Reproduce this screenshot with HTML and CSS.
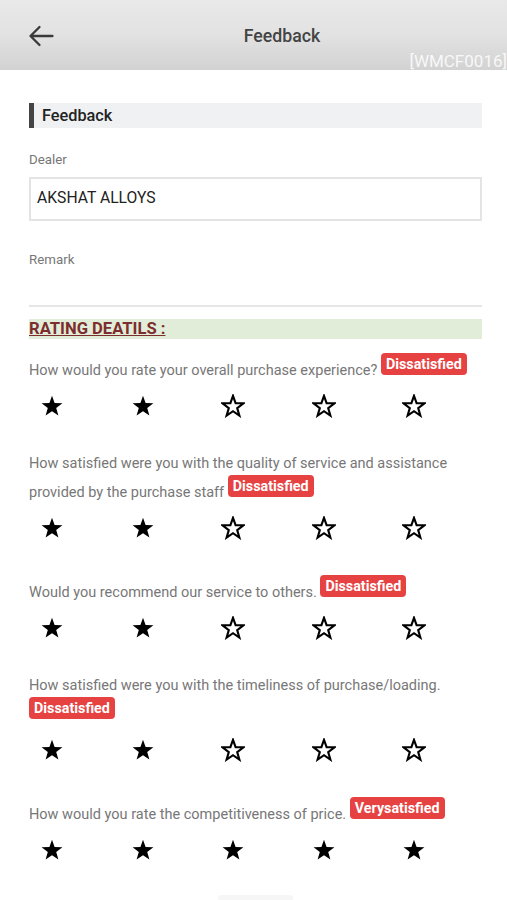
FILE: index.html
```html
<!DOCTYPE html>
<html>
<head>
<meta charset="utf-8">
<link rel="stylesheet" href="styles.css">
</head>
<body>
<svg width="0" height="0" class="defs">
  <defs>
    <path id="star" d="M12 1.8 L14.6 9.1 L22.4 9.3 L16.2 14.1 L18.4 21.6 L12 17.2 L5.6 21.6 L7.8 14.1 L1.6 9.3 L9.4 9.1 Z"/>
  </defs>
</svg>
<header class="appbar">
  <svg class="back" viewBox="0 0 26 24" width="26" height="24"><path d="M24.5 12H2.5M11.5 3 2.5 12l9 9" fill="none" stroke="#3a3a3a" stroke-width="2.3" stroke-linecap="round" stroke-linejoin="round"/></svg>
  <div class="title">Feedback</div>
  <div class="code">[WMCF0016]</div>
</header>
<main class="content">
  <div class="section-head">Feedback</div>
  <div class="label dealer-label">Dealer</div>
  <div class="input">AKSHAT ALLOYS</div>
  <div class="label remark-label">Remark</div>
  <div class="remark"></div>
  <div class="rating-head"><span>RATING DEATILS :</span></div>

  <div class="q first">
    <p class="qtext">How would you rate your overall purchase experience? <span class="badge">Dissatisfied</span></p>
    <div class="stars">
      <svg class="s f"><use href="#star"/></svg><svg class="s f"><use href="#star"/></svg><svg class="s o"><use href="#star"/></svg><svg class="s o"><use href="#star"/></svg><svg class="s o"><use href="#star"/></svg>
    </div>
  </div>
  <div class="q">
    <p class="qtext">How satisfied were you with the quality of service and assistance provided by the purchase staff <span class="badge">Dissatisfied</span></p>
    <div class="stars">
      <svg class="s f"><use href="#star"/></svg><svg class="s f"><use href="#star"/></svg><svg class="s o"><use href="#star"/></svg><svg class="s o"><use href="#star"/></svg><svg class="s o"><use href="#star"/></svg>
    </div>
  </div>
  <div class="q">
    <p class="qtext">Would you recommend our service to others. <span class="badge">Dissatisfied</span></p>
    <div class="stars">
      <svg class="s f"><use href="#star"/></svg><svg class="s f"><use href="#star"/></svg><svg class="s o"><use href="#star"/></svg><svg class="s o"><use href="#star"/></svg><svg class="s o"><use href="#star"/></svg>
    </div>
  </div>
  <div class="q">
    <p class="qtext">How satisfied were you with the timeliness of purchase/loading. <span class="badge">Dissatisfied</span></p>
    <div class="stars">
      <svg class="s f"><use href="#star"/></svg><svg class="s f"><use href="#star"/></svg><svg class="s o"><use href="#star"/></svg><svg class="s o"><use href="#star"/></svg><svg class="s o"><use href="#star"/></svg>
    </div>
  </div>
  <div class="q">
    <p class="qtext">How would you rate the competitiveness of price. <span class="badge">Verysatisfied</span></p>
    <div class="stars">
      <svg class="s f"><use href="#star"/></svg><svg class="s f"><use href="#star"/></svg><svg class="s f"><use href="#star"/></svg><svg class="s f"><use href="#star"/></svg><svg class="s f"><use href="#star"/></svg>
    </div>
  </div>
  <div class="bottom-btn"></div>
</main>
</body>
</html>
```
FILE: styles.css
```css
* { box-sizing: border-box; }
html, body { margin: 0; padding: 0; background: #fff; }
body { font-family: Roboto, "Liberation Sans", Arial, sans-serif; color: #222; width: 507px; overflow: hidden; }
.defs { position: absolute; }

.appbar {
  position: relative;
  height: 70px;
  background: linear-gradient(#e9e9e9 0%, #e2e2e2 50%, #d2d2d2 100%);
  display: flex;
  align-items: center;
  padding-top: 1px;
}
.back { position: absolute; left: 28px; top: 24px; }
.title { flex: 1; text-align: center; font-size: 17.7px; font-weight: 500; color: #444; padding-left: 57px; }
.code { position: absolute; right: 0; bottom: 0; font-size: 17px; color: rgba(255,255,255,0.85); line-height: 18px; }

.content { padding: 0 25px 0 29px; }
.section-head {
  margin-top: 33px;
  height: 25px;
  line-height: 25px;
  background: #f0f1f3;
  border-left: 5px solid #444;
  padding-left: 8px;
  font-size: 16.3px;
  font-weight: 500;
  color: #222;
}
.label { font-size: 13.3px; color: #777; line-height: 16px; }
.dealer-label { margin-top: 24px; }
.input {
  margin-top: 9px;
  height: 44px;
  border: 2px solid #e4e4e4;
  padding-left: 6px;
  font-size: 15.7px;
  line-height: 38px;
  color: #222;
}
.remark-label { margin-top: 31px; }
.remark { height: 39px; border-bottom: 2px solid #e6e6e6; }
.rating-head {
  margin-top: 12px;
  height: 20px;
  background: #e1edd9;
  line-height: 20px;
  font-size: 16.6px;
  font-weight: 700;
  color: #7d2d2d;
}
.rating-head span { text-decoration: underline; }

.q { margin-top: 32px; }
.q.first { margin-top: 14px; }
.qtext {
  margin: 0;
  font-size: 14.5px;
  line-height: 22px;
  color: #777;
}
.badge {
  display: inline-block;
  background: #e64242;
  color: #fff;
  font-weight: 700;
  font-size: 14.3px;
  line-height: 22px;
  height: 22px;
  padding: 0 5px;
  border-radius: 4px;
  vertical-align: 6px;
}
.stars { display: flex; gap: 66.5px; padding-left: 11px; margin-top: 9px; height: 30px; align-items: center; }
.s { width: 24px; height: 24px; flex: none; }
.s.f { fill: #000; }
.s.o { fill: none; stroke: #000; stroke-width: 2.1; stroke-linejoin: miter; }
.bottom-btn { margin: 30px auto 0; width: 75px; height: 10px; background: #f6f6f6; border-radius: 4px; }
```
